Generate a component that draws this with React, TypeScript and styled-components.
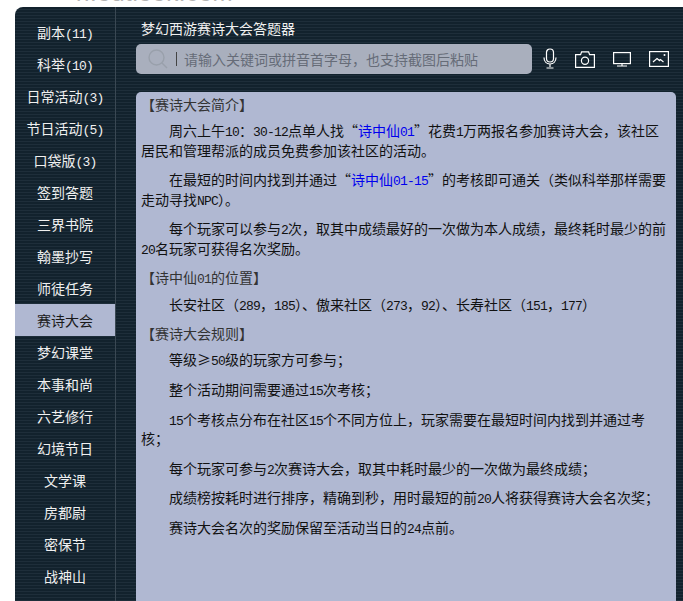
import styled, { createGlobalStyle } from "styled-components";

const GlobalStyle = createGlobalStyle`
	html, body {
		margin: 0;
		padding: 0;
		background: #fff;
	}
	body {
		height: 601px;
		overflow: hidden;
		font-family: "Noto Sans CJK SC", sans-serif;
		font-size: 14px;
	}
`;

const menuItems = [
	"副本(11)",
	"科举(10)",
	"日常活动(3)",
	"节日活动(5)",
	"口袋版(3)",
	"签到答题",
	"三界书院",
	"翰墨抄写",
	"师徒任务",
	"赛诗大会",
	"梦幻课堂",
	"本事和尚",
	"六艺修行",
	"幻境节日",
	"文学课",
	"房都尉",
	"密保节",
	"战神山",
];

// digits and latin letters are half width in the reference, so they get a mono face
const withLatin = (text: string) =>
	text.split(/([0-9A-Za-z()\-]+)/).map((part, i) => (i % 2 ? <Latin key={i}>{part}</Latin> : part));

const App = () => {
	return (
		<Page>
			<GlobalStyle />
			<TopStrip>
				<Watermark>n.outlook.com</Watermark>
			</TopStrip>
			<Panel>
				<Sidebar>
					{menuItems.map((item) => (
						<MenuItem key={item} $active={item === "赛诗大会"}>
							{withLatin(item)}
						</MenuItem>
					))}
				</Sidebar>
				<Main>
					<PanelTitle>梦幻西游赛诗大会答题器</PanelTitle>
					<SearchRow>
						<SearchBox>
							<svg width="22" height="22" viewBox="0 0 22 22" fill="none" stroke="#99a0ab" strokeWidth="1.4">
								<circle cx="9.5" cy="9.5" r="7.5" />
								<path d="M15 15l5 5" />
							</svg>
							<Caret />
							<Placeholder>请输入关键词或拼音首字母，也支持截图后粘贴</Placeholder>
						</SearchBox>
						<ToolIcons>
							<svg width="14" height="22" viewBox="0 0 14 22" fill="none" stroke="#fff" strokeWidth="1.2">
								<rect x="3.5" y="1" width="7" height="13" rx="3.5" />
								<path d="M1 9.5c0 3.800 2.400 6.500 6 6.500s6-2.700 6-6.500M7 16v3M3.500 20h7" />
							</svg>
							<svg width="20" height="17" viewBox="0 0 20 17" fill="none" stroke="#fff" strokeWidth="1.2">
								<path d="M.6 3.600h5l1-2.800h7l1 2.800h4.800v12.800H.6z" />
								<circle cx="10" cy="9.800" r="3.600" />
							</svg>
							<svg width="18" height="15" viewBox="0 0 18 15" fill="none" stroke="#fff" strokeWidth="1.2">
								<rect x=".6" y=".6" width="16.800" height="11" />
								<path d="M9 11.600v2M4 14h10" />
							</svg>
							<svg width="20" height="16" viewBox="0 0 20 16" fill="none" stroke="#fff" strokeWidth="1.2">
								<rect x=".6" y=".6" width="18.800" height="14.800" />
								<path d="M4 11l4-3.500 2.500 2 1-1 3 2.500M8 7.500l3 2.500" />
								<circle cx="15.500" cy="4" r="1" fill="#fff" stroke="none" />
							</svg>
						</ToolIcons>
					</SearchRow>
					<Content>
						<Heading>【赛诗大会简介】</Heading>
						<Para>
							{withLatin("周六上午10：30-12点单人找“")}
							<Link>{withLatin("诗中仙01")}</Link>
							{withLatin("”花费1万两报名参加赛诗大会，该社区")}
							<br />
							居民和管理帮派的成员免费参加该社区的活动。
						</Para>
						<Para>
							在最短的时间内找到并通过“<Link>{withLatin("诗中仙01-15")}</Link>”的考核即可通关（类似科举那样需要
							<br />
							{withLatin("走动寻找NPC）。")}
						</Para>
						<Para>
							{withLatin("每个玩家可以参与2次，取其中成绩最好的一次做为本人成绩，最终耗时最少的前20名玩家可获得名次奖励。")}
						</Para>
						<Heading>{withLatin("【诗中仙01的位置】")}</Heading>
						<Para>{withLatin("长安社区（289，185）、傲来社区（273，92）、长寿社区（151，177）")}</Para>
						<Heading>【赛诗大会规则】</Heading>
						<Para>{withLatin("等级≥50级的玩家方可参与；")}</Para>
						<Para>{withLatin("整个活动期间需要通过15次考核；")}</Para>
						<Para>{withLatin("15个考核点分布在社区15个不同方位上，玩家需要在最短时间内找到并通过考核；")}</Para>
						<Para>{withLatin("每个玩家可参与2次赛诗大会，取其中耗时最少的一次做为最终成绩；")}</Para>
						<Para>{withLatin("成绩榜按耗时进行排序，精确到秒，用时最短的前20人将获得赛诗大会名次奖；")}</Para>
						<Para>{withLatin("赛诗大会名次的奖励保留至活动当日的24点前。")}</Para>
					</Content>
				</Main>
			</Panel>
		</Page>
	);
};

export default App;

const Page = styled.div`
	height: 601px;
	overflow: hidden;
	display: flex;
	flex-direction: column;
`;

const TopStrip = styled.div`
	height: 7px;
	flex: none;
	overflow: hidden;
	padding-left: 76px;
`;

const Watermark = styled.div`
	font-family: "Liberation Sans", sans-serif;
	font-size: 24px;
	line-height: 18px;
	margin-top: -16px;
	color: #b4b4b4;
	white-space: nowrap;
	letter-spacing: 0.6px;
`;

const Panel = styled.div`
	flex: 1;
	min-height: 0;
	margin-left: 15px;
	display: flex;
	border-top-left-radius: 8px;
	overflow: hidden;
	background: repeating-linear-gradient(to bottom, #12222d 0, #12222d 2px, #1e2e3a 2px, #1e2e3a 3px);
`;

const Sidebar = styled.div`
	width: 100px;
	flex: none;
	padding-top: 9px;
	border-right: 1px solid #3a4853;
	overflow: hidden;
`;

const MenuItem = styled.div<{ $active?: boolean }>`
	height: 32px;
	line-height: 32px;
	text-align: center;
	color: ${(p) => (p.$active ? "#1a1a1a" : "#f0f0f0")};
	background: ${(p) => (p.$active ? "#b0b8d2" : "transparent")};
`;

const Main = styled.div`
	flex: 1;
	min-width: 0;
	padding: 0 7px 0 20px;
	display: flex;
	flex-direction: column;
`;

const PanelTitle = styled.div`
	height: 37px;
	line-height: 43px;
	padding-left: 5px;
	color: #f0f0f0;
	flex: none;
`;

const SearchRow = styled.div`
	display: flex;
	align-items: center;
	height: 30px;
	flex: none;
	margin-bottom: 18px;
`;

const SearchBox = styled.div`
	width: 396px;
	height: 30px;
	box-sizing: border-box;
	background: #a9afbd;
	border-radius: 5px;
	padding-left: 11px;
	display: flex;
	align-items: center;
	flex: none;
`;

const Caret = styled.span`
	width: 1px;
	height: 14px;
	background: #444;
	margin-left: 7px;
`;

const Placeholder = styled.span`
	margin-left: 7px;
	color: #666c78;
`;

const ToolIcons = styled.div`
	display: flex;
	align-items: center;
	gap: 18px;
	margin-left: 11px;
	color: #fff;
`;

const Content = styled.div`
	flex: 1;
	min-height: 0;
	box-sizing: border-box;
	padding: 3px 5px 0;
	background: #b0b8d2;
	border-radius: 5px 5px 0 0;
	color: #111;
	line-height: 19.6px;
`;

const Heading = styled.div`
	margin: -0.5px 0 7px;
	color: #333;
`;

const Para = styled.p`
	margin: 0 0 10px;
	text-indent: 28px;
`;

const Link = styled.span`
	color: #0000ee;
`;

const Latin = styled.span`
	font-family: "Liberation Mono", monospace;
	font-size: 13px;
	line-height: 0;
	letter-spacing: -0.8px;
`;
